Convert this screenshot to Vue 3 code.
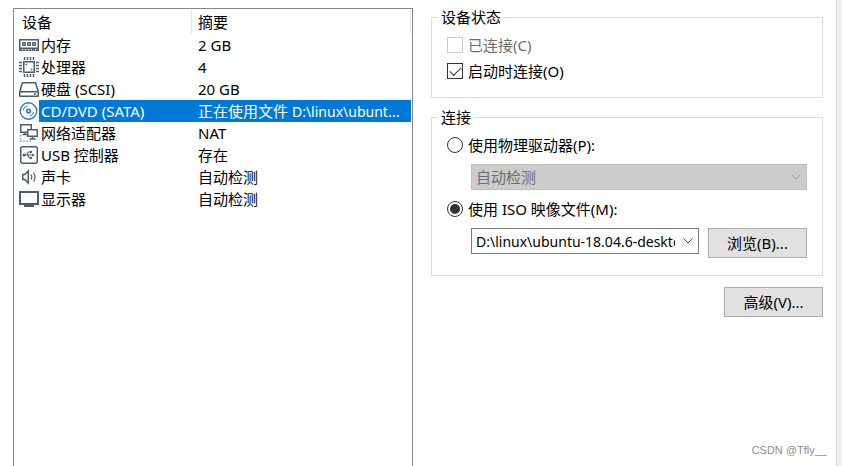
<script setup>
import { ref } from 'vue'

const devices = [
  { icon: 'memory', name: '内存', summary: '2 GB' },
  { icon: 'cpu', name: '处理器', summary: '4' },
  { icon: 'disk', name: '硬盘 (SCSI)', summary: '20 GB' },
  { icon: 'cd', name: 'CD/DVD (SATA)', summary: '正在使用文件 ', path: 'D:\\linux\\ubuntu-18.04.6-desktop-amd64.iso' },
  { icon: 'network', name: '网络适配器', summary: 'NAT' },
  { icon: 'usb', name: 'USB 控制器', summary: '存在' },
  { icon: 'sound', name: '声卡', summary: '自动检测' },
  { icon: 'display', name: '显示器', summary: '自动检测' }
]
const selected = ref('cd')
const connected = ref(false)
const connectAtPowerOn = ref(true)
const source = ref('iso')
const isoPath = ref('D:\\linux\\ubuntu-18.04.6-desktop-amd64.iso')
</script>

<template>
  <main class="page">
    <section class="list">
      <table>
        <colgroup>
          <col class="col-icon" />
          <col class="col-name" />
          <col />
        </colgroup>
        <thead>
          <tr>
            <th colspan="2"><div>设备</div></th>
            <th><div>摘要</div></th>
          </tr>
        </thead>
        <tbody>
          <tr
            v-for="d in devices"
            :key="d.icon"
            :class="{ selected: selected === d.icon }"
            @click="selected = d.icon"
          >
            <td class="icon">
              <svg width="20" height="22" viewBox="0 0 20 22" fill="none" stroke="#4d5e6b" stroke-width="1.5" aria-hidden="true">
                <template v-if="d.icon === 'memory'">
                  <path d="M.75 5.750h18.500v10.500h-3.500v-1h-2v1h-12.999z" />
                  <path d="M3.500 8.500h3v3h-3zM8.500 8.500h3v3h-3zM13.500 8.500h3v3h-3z" fill="#8d99a2" stroke-width="1" />
                  <path d="M1 14.500h18" stroke-width="2" />
                  <path d="M3.500 15v1.500M6.500 15v1.500M9.500 15v1.500M12.500 15v1.500M16.500 15v1.500" stroke="#dfe4e7" stroke-width="1" />
                </template>
                <template v-else-if="d.icon === 'cpu'">
                  <path d="M4.750 5.750h10.500v10.500h-10.500z" />
                  <path d="M5.500 1v3M8.500 1v3M11.500 1v3M14.500 1v3M5.500 18v3M8.500 18v3M11.500 18v3M14.500 18v3M0 6.500h3M0 9.500h3M0 12.500h3M0 15.500h3M17 6.500h3M17 9.500h3M17 12.500h3M17 15.500h3" />
                  <path d="M6.500 8.500h1.500M12 13.500h1.500" />
                </template>
                <template v-else-if="d.icon === 'disk'">
                  <path d="M3.500 4.750h13l2.750 9v4.500h-18.500v-4.500zM1 13.750h18M15 16h2" stroke-linejoin="round" />
                </template>
                <g v-else-if="d.icon === 'cd'" stroke="#2878b8">
                  <circle cx="9.500" cy="11" r="8.250" stroke-width="1.300" />
                  <circle cx="9.500" cy="11" r="1.800" stroke-width="1.600" />
                  <path d="M4.300 10a5.300 5.300 0 0 1 4-4.200M14.700 12a5.300 5.300 0 0 1-4 4.200" stroke-width="1" />
                </g>
                <template v-else-if="d.icon === 'network'">
                  <path d="M8 10.250H1.750v-7.500h10.500V7M3.500 12.500H8M6 10v2.500" />
                  <path d="M8.750 7.750h9.500v6.500h-9.500zM13.500 14v3M10.500 17h6" />
                  <path d="M1.500 13v6.250H13" stroke-dasharray="1.500 1.500" stroke="#8d99a2" />
                </template>
                <template v-else-if="d.icon === 'usb'">
                  <rect x="1.750" y="2.750" width="16.500" height="16.500" rx="2" />
                  <path d="M5 11h9M7.500 11l2-3h2M8.500 11l2 3h2" stroke-width="1.200" />
                  <circle cx="5" cy="11" r="1.500" fill="#4d5e6b" stroke="none" />
                  <path d="M13 9.500v3l3-1.500zM11 7h2v2h-2zM11 13h2v2h-2z" fill="#4d5e6b" stroke="none" />
                </template>
                <template v-else-if="d.icon === 'sound'">
                  <path d="M3.750 8.500H6L9.250 5v12L6 13.500H3.750z" />
                  <path d="M12 8.500q1.700 2.500 0 5M14.500 6.500q3 4.500 0 9" stroke-width="1.200" />
                </template>
                <template v-else>
                  <path d="M1 4h18v12H1z" stroke-width="2" />
                  <path d="M5 18h10" stroke-width="2" />
                </template>
              </svg>
            </td>
            <td class="name">{{ d.name }}</td>
            <td class="summary">{{ d.summary }}<span v-if="d.path" class="path">{{ d.path }}</span></td>
          </tr>
        </tbody>
      </table>
    </section>

    <section class="settings">
      <fieldset class="status">
        <legend>设备状态</legend>
        <label class="option off"><input v-model="connected" type="checkbox" disabled />已连接(C)</label>
        <label class="option"><input v-model="connectAtPowerOn" type="checkbox" />启动时连接(O)</label>
      </fieldset>

      <fieldset class="connection">
        <legend>连接</legend>
        <label class="option"><input v-model="source" type="radio" name="source" value="drive" />使用物理驱动器(P):</label>
        <div class="field combo off">
          <select disabled aria-label="物理驱动器">
            <option>自动检测</option>
          </select>
          <svg class="chevron" width="10" height="6" viewBox="0 0 10 6" aria-hidden="true"><path d="M.5.5 5 5 9.500.5" /></svg>
        </div>
        <label class="option"><input v-model="source" type="radio" name="source" value="iso" />使用 ISO 映像文件(M):</label>
        <div class="field file">
          <div class="combo">
            <input v-model="isoPath" class="path" type="text" aria-label="ISO 映像文件" />
            <button type="button" class="drop" aria-label="展开">
              <svg class="chevron" width="10" height="6" viewBox="0 0 10 6" aria-hidden="true"><path d="M.5.5 5 5 9.500.5" /></svg>
            </button>
          </div>
          <button type="button" class="push">浏览(B)...</button>
        </div>
      </fieldset>

      <button type="button" class="push advanced">高级(V)...</button>
    </section>
    <div class="edge"></div>
    <span class="watermark">CSDN @Tfly__</span>
  </main>
</template>

<style>
body {
  margin: 0;
  background: #fff;
}
</style>

<style scoped>
.page {
  position: relative;
  box-sizing: border-box;
  min-height: 100vh;
  display: grid;
  grid-template-columns: minmax(0, 400fr) minmax(0, 423fr) 6px;
  padding-left: 13px;
  font: 15px/20px "Noto Sans", "Noto Sans CJK SC", sans-serif;
  color: #000;
}
.list {
  margin-top: 8px;
  border: 1px solid #828790;
  border-bottom: 0;
  padding-right: 1px;
}
table {
  width: 100%;
  table-layout: fixed;
  border-collapse: separate;
  border-spacing: 0;
}
.col-icon { width: 25px; }
.col-name { width: 153px; }
th, td {
  padding: 0;
  text-align: left;
  font-weight: 400;
  white-space: nowrap;
}
th {
  height: 25px;
}
th div {
  height: 24px;
  line-height: 24px;
  padding-left: 8px;
  border-right: 1px solid #e5e5e5;
}
th + th div { padding-left: 6px; }
td {
  height: 22px;
  line-height: 20px;
}
.icon { padding-left: 5px; }
.icon svg { display: block; }
.name { padding-left: 2px; }
.summary {
  padding: 0 6px;
  overflow: hidden;
  text-overflow: ellipsis;
}
.selected .name, .selected .summary {
  background: #0078d7;
  color: #fff;
}
.settings {
  display: flex;
  flex-direction: column;
  padding: 7px 13px 0 18px;
}
fieldset {
  min-width: 0;
  margin: 0;
  border: 1px solid #dcdcdc;
}
legend {
  padding: 0 3px;
  margin-left: -9px;
}
.status { padding: 5px 15px 13px; }
.connection {
  margin-top: 9px;
  padding: 5px 15px 17px;
}
.option {
  display: flex;
  align-items: center;
  height: 26px;
  gap: 5px;
}
.option.off { color: #6d6d6d; }
.option input {
  appearance: none;
  box-sizing: border-box;
  width: 16px;
  height: 16px;
  margin: 0;
  border: 1px solid #333;
  background: #fff;
  display: grid;
  place-items: center;
}
.option.off input { border-color: #ccc; }
.option input[type="radio"] { border-radius: 50%; }
.option input[type="radio"]:checked::before {
  content: "";
  width: 10px;
  height: 10px;
  border-radius: 50%;
  background: #333;
}
.option input[type="checkbox"]:checked::before {
  content: "";
  box-sizing: border-box;
  width: 11px;
  height: 6px;
  margin-bottom: 3px;
  border: solid #333;
  border-width: 0 0 1px 1px;
  transform: rotate(-45deg);
}
.field { margin: 6px 0 6px 24px; }
.combo {
  box-sizing: border-box;
  display: flex;
  align-items: center;
  height: 26px;
  border: 1px solid #7a7a7a;
  background: #fff;
}
.combo.off {
  border-color: #bfbfbf;
  background: #ccc;
  padding-right: 5px;
}
.combo select, .combo input {
  appearance: none;
  flex: 1;
  min-width: 0;
  height: 24px;
  box-sizing: border-box;
  border: 0;
  padding: 0 0 0 4px;
  font: inherit;
  color: #000;
  background: none;
}
.combo select {
  color: #6d6d6d;
  opacity: 1;
}
.summary .path, .combo .path { font-size: 14px; }
.chevron {
  flex: none;
  fill: none;
  stroke: #444;
}
.off .chevron { stroke: #a0a0a0; }
.drop {
  display: flex;
  align-items: center;
  justify-content: flex-end;
  width: 23px;
  height: 24px;
  padding: 0 5px 0 0;
  border: 0;
  background: none;
}
.field.file {
  display: flex;
  gap: 9px;
  margin-bottom: 0;
}
.file .combo {
  flex: 1;
  min-width: 0;
}
.push {
  box-sizing: border-box;
  flex: none;
  width: 99px;
  height: 30px;
  padding: 0;
  border: 1px solid #adadad;
  background: #e1e1e1;
  color: #000;
  font: inherit;
}
.advanced {
  align-self: flex-end;
  margin-top: 11px;
}
.edge {
  border-left: 1px solid #d9d9d9;
  background: #f0f0f0;
}
.watermark {
  position: absolute;
  right: 15px;
  bottom: 7px;
  font: 11px/18px "Liberation Sans", sans-serif;
  color: #8c8c8c;
}
</style>
